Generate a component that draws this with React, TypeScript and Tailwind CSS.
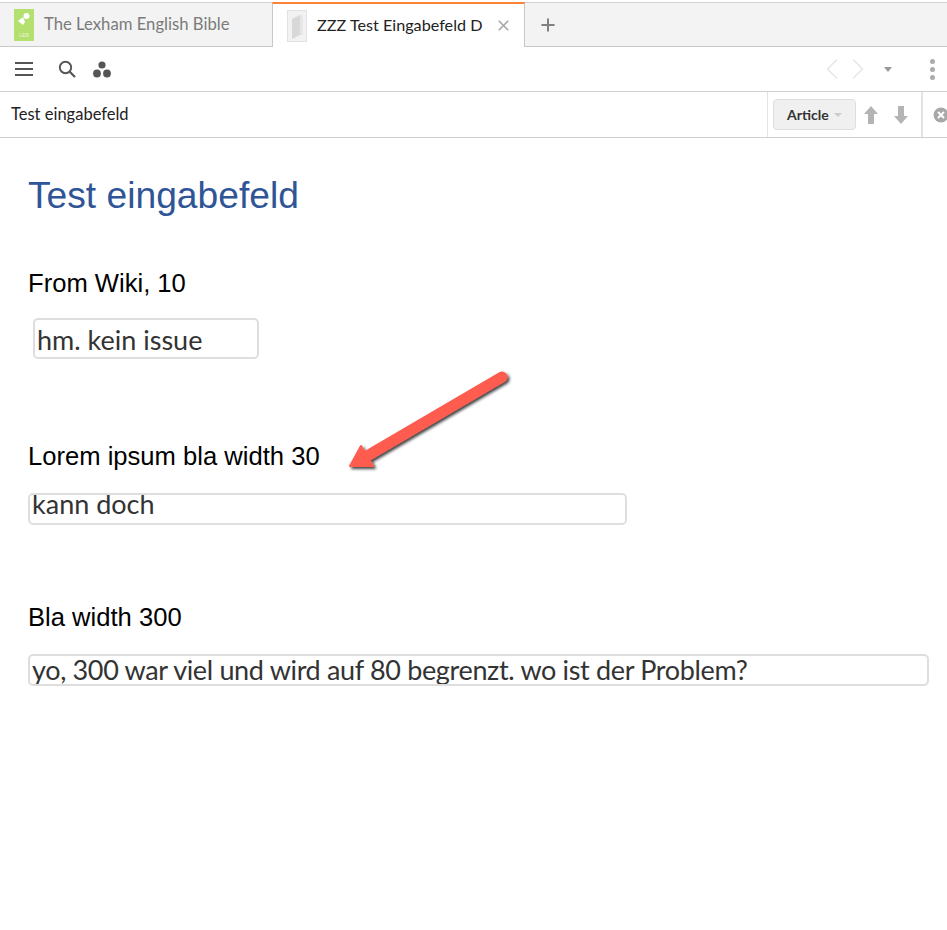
import { ChevronLeft, ChevronRight, Plus, X } from 'lucide-react'

const uiFont = "font-['Lato','Noto_Sans',sans-serif]"

function Field({ value, className }: { value: string; className: string }) {
  return (
    <input
      readOnly
      value={value}
      className={`block border-2 border-[#dedede] rounded-[5px] bg-white text-[#333] text-[27px] outline-none ${uiFont} ${className}`}
    />
  )
}

export default function App() {
  return (
    <div className="relative w-[947px] h-[930px] bg-white overflow-hidden">
      {/* Tabs */}
      <div className={`h-[47px] pt-[2px] ${uiFont}`}>
        <div className="flex h-[45px] bg-[#f3f3f3] border-b border-[#c8c8c8] border-t border-t-[#d0d0d0]">
          <div className="flex items-center w-[272px] pl-[14px] shrink-0">
            <svg width="20" height="32" viewBox="0 0 20 32" className="shrink-0">
              <rect width="20" height="32" fill="#b3e06e" />
              <path d="M9 8L4 12l5 4 2-3z" fill="#fff" />
              <circle cx="12.5" cy="7" r="3" fill="#fff" />
              <text x="10" y="28" textAnchor="middle" fontSize="5" fill="#eaf6d0" fontFamily="Liberation Sans">LEB</text>
            </svg>
            <span className="ml-[10px] text-[16.7px] text-[#7b7b7b] whitespace-nowrap">The Lexham English Bible</span>
          </div>
          <div className="flex items-center w-[253px] -mt-px h-[45px] bg-white border-t-2 border-t-[#fb8437] border-x border-x-[#c8c8c8] pl-[14px] shrink-0">
            <svg width="20" height="32" viewBox="0 0 20 32" className="shrink-0">
              <rect x="0.5" y="0.5" width="19" height="31" fill="#f2f2f2" stroke="#e2e2e2" />
              <path d="M5 9l8-4v20l-8 4z" fill="#d8d8d8" />
              <path d="M13 5h3v20h-3z" fill="#e6e6e6" />
            </svg>
            <span className="ml-[10px] text-[16.2px] text-[#222] whitespace-nowrap">ZZZ Test Eingabefeld D</span>
            <X size={17} strokeWidth={2.4} className="ml-[12px] text-[#aaa]" />
          </div>
          <Plus size={20} strokeWidth={2.4} className="ml-[13px] mt-[12px] text-[#808080]" />
        </div>
      </div>

      {/* Toolbar */}
      <div className="flex items-center h-[45px] border-b border-[#cfcfcf] pl-[15px] pr-[12px]">
        <svg width="18" height="16" viewBox="0 0 18 16" className="text-[#555]">
          <path d="M0 2h18M0 8h18M0 14h18" stroke="currentColor" strokeWidth="2.2" />
        </svg>
        <svg width="18" height="18" viewBox="0 0 18 18" className="ml-[25px] text-[#555]">
          <circle cx="7.5" cy="7.5" r="5.7" fill="none" stroke="currentColor" strokeWidth="1.9" />
          <path d="M11.5 11.5l5.5 5.5" stroke="currentColor" strokeWidth="2.2" />
        </svg>
        <svg width="18" height="17" viewBox="0 0 18 17" className="ml-[17px] text-[#555]">
          <circle cx="9" cy="4" r="3.6" fill="currentColor" />
          <circle cx="4" cy="12.5" r="3.9" fill="currentColor" />
          <circle cx="14" cy="12.5" r="3.9" fill="currentColor" />
        </svg>
        <div className="ml-auto flex items-center">
          <ChevronLeft size={36} strokeWidth={1} className="text-[#e6e6e6]" />
          <ChevronRight size={36} strokeWidth={1} className="-ml-[10px] text-[#e6e6e6]" />
          <div className="ml-[8px] w-0 h-0 border-x-[4px] border-x-transparent border-t-[5px] border-t-[#999]" />
          <div className="ml-[38px] flex flex-col gap-[3px]">
            <span className="w-[5px] h-[5px] rounded-full bg-[#aaa]" />
            <span className="w-[5px] h-[5px] rounded-full bg-[#aaa]" />
            <span className="w-[5px] h-[5px] rounded-full bg-[#aaa]" />
          </div>
        </div>
      </div>

      {/* Article bar */}
      <div className={`flex items-stretch h-[46px] border-b border-[#cfcfcf] ${uiFont}`}>
        <div className="flex items-center pl-[11px] text-[16.5px] text-[#222] flex-1">Test eingabefeld</div>
        <div className="flex items-center w-[154px] border-l border-[#e4e4e4] pl-[5px]">
          <div className="flex items-center w-[83px] h-[31px] rounded-[4px] border border-[#dedede] bg-[#f0f0f0] pl-[13px]">
            <span className="text-[14px] font-bold text-[#333]">Article</span>
            <div className="ml-[5px] w-0 h-0 border-x-[4px] border-x-transparent border-t-[4px] border-t-[#ccc]" />
          </div>
          <svg width="14" height="18" viewBox="0 0 14 18" className="ml-[8px]">
            <path d="M7 0l7 8H10v10H4V8H0z" fill="#b4b4b4" />
          </svg>
          <svg width="14" height="18" viewBox="0 0 14 18" className="ml-[16px]">
            <path d="M7 18l7-8H10V0H4v10H0z" fill="#b4b4b4" />
          </svg>
        </div>
        <div className="flex items-center w-[26px] border-l-2 border-[#e4e4e4] pl-[10px] overflow-hidden">
          <svg width="16" height="16" viewBox="0 0 16 16" className="shrink-0">
            <circle cx="8" cy="8" r="7.5" fill="#a8a8a8" />
            <path d="M5 5l6 6M11 5l-6 6" stroke="#fff" strokeWidth="2" />
          </svg>
        </div>
      </div>

      {/* Article */}
      <div className="pl-[28px] font-['Liberation_Sans',Arial,sans-serif]">
        <h1 className="pt-[35px] text-[37.2px] leading-[44px] text-[#2f5597]">Test eingabefeld</h1>
        <p className="mt-[51px] text-[25.6px] leading-[30px] text-black">From Wiki, 10</p>
        <Field value="hm. kein issue" className="mt-[20px] ml-[5px] w-[226px] h-[41px] pl-[2px] pt-[2px]" />
        <p className="mt-[82px] text-[25.6px] leading-[30px] text-black">Lorem ipsum bla width 30</p>
        <Field value="kann doch" className="mt-[22px] w-[599px] h-[32px] pl-[2px] pb-[9px]" />
        <p className="mt-[77px] text-[25.6px] leading-[30px] text-black">Bla width 300</p>
        <Field value="yo, 300 war viel und wird auf 80 begrenzt. wo ist der Problem?" className="mt-[22px] w-[901px] h-[32px] pl-[2px] tracking-[-0.34px]" />
      </div>

      {/* Annotation arrow */}
      <svg width="190" height="120" viewBox="0 0 190 120" className="absolute left-[335px] top-[360px]">
        <defs>
          <filter id="arrowShadow" x="-20%" y="-20%" width="140%" height="140%">
            <feDropShadow dx="2" dy="2" stdDeviation="1.5" floodColor="#000" floodOpacity="0.75" />
          </filter>
        </defs>
        <g filter="url(#arrowShadow)">
          <path d="M167 17L32 96" stroke="#fd5c50" strokeWidth="11" strokeLinecap="round" />
          <path d="M15 106L26 86L38 106Z" fill="#fd5c50" stroke="#fd5c50" strokeWidth="2" strokeLinejoin="round" />
        </g>
      </svg>
    </div>
  )
}
